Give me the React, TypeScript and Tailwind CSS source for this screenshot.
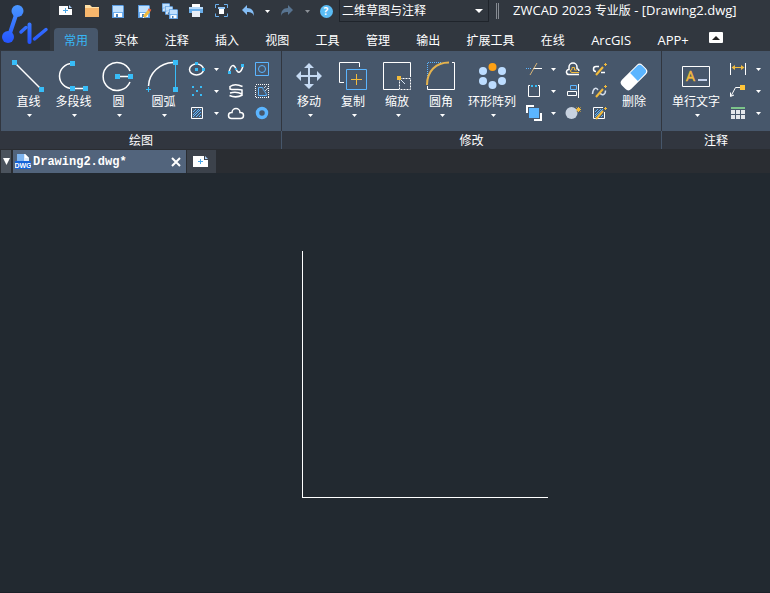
import React from 'react'

const SANS = 'font-["Open_Sans","Noto_Sans_CJK_SC",sans-serif]'

const BLUE = '#5bb5ff'
const CYAN = '#38bdf8'
const GOLD = '#f2bb3c'

interface Tool {
  label: string;
  icon: React.ReactNode;
}

const Icon = ({ children }: { children: React.ReactNode }) => (
  <svg className="h-[18px] w-[18px] shrink-0" viewBox="0 0 18 18" fill="none" stroke="#fff">
    {children}
  </svg>
)

const Caret = ({ color = '#fff' }: { color?: string }) => (
  <svg className="h-[3px] w-[5px]" viewBox="0 0 5 3">
    <path d="M0 0h5L2.5 3z" fill={color} />
  </svg>
)

const Dot = ({ x, y, s = 5 }: { x: number; y: number; s?: number }) => (
  <rect x={x} y={y} width={s} height={s} fill={CYAN} stroke="none" />
)

const Floppy = ({ x = 0, y = 0, s = 12 }: { x?: number; y?: number; s?: number }) => (
  <svg x={x} y={y} width={s} height={s + 1} viewBox="0 0 12 13" stroke="none">
    <path d="M0 0h11l1 1v12H0z" fill="#5a9be0" />
    <path d="M1 1h10v6H1z" fill="#bfe0ff" />
    <path d="M1 7h10v5H1z" fill="#6fb0f0" />
    <path d="M2 8h8v4H2z" fill="#fff" />
    <path d="M4 9h2v3H4z" fill="#4a80b8" />
  </svg>
)

const Hatch = () => (
  <path d="M5 8l3-3M5 11l6-6M5 13l8-8M8 13l5-5M11 13l2-2" stroke={BLUE} strokeWidth="1" />
)

const Logo = () => (
  <svg className="h-[50px] w-[50px]" viewBox="0 0 50 50" fill="none">
    <defs>
      <linearGradient id="logo" gradientUnits="userSpaceOnUse" x1="0" y1="5" x2="0" y2="44">
        <stop offset="0" stopColor="#4a97ff" />
        <stop offset="1" stopColor="#2352ff" />
      </linearGradient>
    </defs>
    <g stroke="url(#logo)" strokeLinecap="round">
      <path d="M17 12L9 36" strokeWidth="4" />
      <path d="M21 32L26 27.500" strokeWidth="3.500" />
      <path d="M29.500 24.500V42" strokeWidth="4" />
      <path d="M34.500 39L46 29.500" strokeWidth="3.500" />
    </g>
    <circle cx="17.500" cy="11" r="6" fill="url(#logo)" />
    <circle cx="8" cy="37" r="6" fill="url(#logo)" />
  </svg>
)

const quickTools: Tool[] = [
  {
    label: '新建',
    icon: (
      <Icon>
        <path d="M3 4h9v3h4v6H3z" fill="#fff" stroke="none" />
        <path d="M13 3v3h3z" fill="#a8cdf5" stroke="none" />
        <path d="M9.500 6v5M7 8.500h5" stroke="#4aa8e8" />
      </Icon>
    )
  },
  {
    label: '打开',
    icon: (
      <Icon>
        <path d="M3 3h5l2 2h7v3H3z" fill="#ffe0a6" stroke="none" />
        <path d="M3 6h14v9H3z" fill="#f7b66c" stroke="none" />
      </Icon>
    )
  },
  { label: '保存', icon: <Icon><Floppy x={4} y={3} /></Icon> },
  {
    label: '另存为',
    icon: (
      <Icon>
        <Floppy x={4} y={3} />
        <path d="M10 15l5-6" stroke={GOLD} strokeWidth="3" />
        <path d="M15 9l1-2" stroke="#e8663c" strokeWidth="3" />
        <path d="M9 16l1-1" stroke="#fff" />
      </Icon>
    )
  },
  {
    label: '全部保存',
    icon: (
      <Icon>
        <Floppy x={2} y={1} s={8} />
        <Floppy x={5} y={4} s={8} />
        <Floppy x={9} y={7} s={9} />
      </Icon>
    )
  },
  {
    label: '打印',
    icon: (
      <Icon>
        <path d="M6 2h8v4H6z" fill="#fff" stroke="none" />
        <path d="M3 5h14v6H3z" fill="#6aaeea" stroke="none" />
        <path d="M3 5h14v2H3z" fill="#b9dbfb" stroke="none" />
        <path d="M6 9h8v6H6z" fill="#e8eef6" stroke="none" />
      </Icon>
    )
  },
  {
    label: '打印预览',
    icon: (
      <Icon>
        <path d="M3.500 6V2.500H7M12 2.500h3.500V6M3.500 11.500V14.500H7M12 14.500h3.500v-3" stroke="#6aaeea" />
        <path d="M6 5h7v2H6z" fill="#8fc4f5" stroke="none" />
        <path d="M7 7h5v5H7z" fill="#fff" stroke="none" />
      </Icon>
    )
  }
]

const tabs = ['常用', '实体', '注释', '插入', '视图', '工具', '管理', '输出', '扩展工具', '在线']
const addonTabs = ['ArcGIS', 'APP+']

const drawTools: Tool[] = [
  {
    label: '直线',
    icon: (
      <>
        <path d="M9 5l27 27" strokeWidth="1.500" />
        <Dot x={6} y={2} />
        <Dot x={33} y={29} />
      </>
    )
  },
  {
    label: '多段线',
    icon: (
      <>
        <path d="M21 5.500A12.500 12.500 0 0 0 21 30.500H33" strokeWidth="1.500" />
        <Dot x={19} y={3} />
        <Dot x={19} y={28} />
        <Dot x={32} y={28} />
      </>
    )
  },
  {
    label: '圆',
    icon: (
      <>
        <path d="M34 13A14 14 0 1 0 34 24M22 18.500h12" strokeWidth="1.500" />
        <Dot x={19} y={16} />
        <Dot x={32} y={16} />
      </>
    )
  },
  {
    label: '圆弧',
    icon: (
      <>
        <path d="M7.500 28C8 15 19 5 32 4.500" strokeWidth="1.500" />
        <path d="M34.500 7v22" stroke={CYAN} />
        <path d="M7.500 29v5M5 31.500h5" stroke={CYAN} />
        <Dot x={32} y={2} />
        <Dot x={32} y={29} />
      </>
    )
  }
]

const modifyTools: Tool[] = [
  {
    label: '移动',
    icon: (
      <g fill="#c5daf3" stroke="none">
        <path d="M21 9h2v8h8v2h-8v8h-2v-8h-8v-2h8z" />
        <path d="M22 5l5 5h-10zM22 31l5-5h-10zM9 18l5-5v10zM35 18l-5-5v10z" />
      </g>
    )
  },
  {
    label: '复制',
    icon: (
      <>
        <path d="M13 24.500H8.500V4.500H28.500V9" />
        <path d="M15.500 11.500h20v20h-20z" stroke={BLUE} />
        <path d="M25.500 16v11M20 21.500h11" stroke={GOLD} />
      </>
    )
  },
  {
    label: '缩放',
    icon: (
      <>
        <path d="M24 31.500H8.500V4.500H35.500V19" />
        <path d="M24.500 20.500h11v11h-11z" strokeDasharray="2 1" />
        <path d="M26 22l4 4" stroke="#d8e6f5" />
        <path d="M22 18h4v4h-4z" fill={GOLD} stroke="none" />
      </>
    )
  },
  {
    label: '圆角',
    icon: (
      <>
        <path d="M8.500 24V4.500H22" stroke={BLUE} strokeDasharray="1 1" />
        <path d="M33 4.500h2.500v27h-27V28" />
        <path d="M8 27C8 13 17 4.500 30 4.500" stroke="#e5b34e" strokeWidth="2" />
      </>
    )
  }
]

const arrayIcon = (
  <g fill="#bcdcff" stroke="none">
    <circle cx="29.500" cy="9" r="4" fill="#ffa114" />
    <circle cx="39" cy="13" r="4" />
    <circle cx="39" cy="23" r="4" />
    <circle cx="29.500" cy="27" r="4" />
    <circle cx="20" cy="23" r="4" />
    <circle cx="20" cy="13" r="4" />
  </g>
)

const eraseIcon = (
  <g transform="rotate(-45 19 19)" stroke="none">
    <rect x="4.500" y="12.500" width="29" height="13" rx="4" fill="#fff" />
    <path d="M19 13.500h10a3.500 3.500 0 0 1 3.500 3.500v4a3.500 3.500 0 0 1-3.500 3.500H19z" fill={BLUE} />
  </g>
)

const textIcon = (
  <>
    <path d="M15.500 8.500h27v20h-27z" />
    <text x="19" y="23" fontSize="14" fontFamily="Open Sans" fill={GOLD} stroke={GOLD} strokeWidth="0.500">A</text>
    <path d="M31 22h9" stroke="#c3d0ea" strokeWidth="2" />
  </>
)

const pen = (
  <>
    <path d="M6 15l7-8" stroke={GOLD} strokeWidth="2" />
    <path d="M15.500 3v3M14 4.500h3" stroke={GOLD} />
  </>
)

// each row: icon with a menu, then two plain icons
const drawGrid: Tool[][] = [
  [
    {
      label: '椭圆',
      icon: (
        <>
          <ellipse cx="8.500" cy="9.500" rx="7" ry="5.500" strokeWidth="1.500" />
          <Dot x={7} y={2} s={3} />
          <Dot x={7} y={8} s={3} />
          <Dot x={14} y={8} s={3} />
        </>
      )
    },
    {
      label: '样条曲线',
      icon: (
        <>
          <path d="M2 12C4 4 7 4 9 9S14 13 16 6" strokeWidth="1.500" />
          <Dot x={1} y={11} s={3} />
          <Dot x={8} y={8} s={2} />
          <Dot x={14} y={4} s={3} />
        </>
      )
    },
    {
      label: '面域',
      icon: (
        <g stroke={BLUE}>
          <path d="M2.500 2.500h13v13h-13z" />
          <circle cx="9" cy="9" r="3.500" />
        </g>
      )
    }
  ],
  [
    {
      label: '点',
      icon: (
        <>
          <Dot x={4} y={4} s={2} />
          <Dot x={12} y={4} s={2} />
          <Dot x={8} y={8} s={2} />
          <Dot x={4} y={12} s={2} />
          <Dot x={12} y={12} s={2} />
        </>
      )
    },
    {
      label: '螺旋',
      icon: (
        <path
          d="M15.500 4.500C11 2.500 6 2.500 3 4.500V7C7 8.500 11 6.500 15 8V12C11 10 7 10 3 11M2.500 13.500C7 15.500 11 15.500 15.500 13"
          strokeWidth="1.500"
        />
      )
    },
    {
      label: '区域覆盖',
      icon: (
        <>
          <path d="M2.500 2.500h13v13h-13z" strokeDasharray="1 1" shapeRendering="crispEdges" />
          <path d="M5.500 5.500h4c.5 3 4 5 4 8h-8z" stroke={BLUE} />
          <path d="M11 6l2-2M12 9l3-3" stroke="#c9d4e2" />
        </>
      )
    }
  ],
  [
    {
      label: '图案填充',
      icon: (
        <>
          <path d="M3.500 3.500h11v11h-11z" />
          <Hatch />
        </>
      )
    },
    {
      label: '修订云线',
      icon: (
        <path d="M4.500 14.500A3 3 0 0 1 4.500 8.500H5A4 4 0 1 1 13 8.500H13.500A3 3 0 0 1 13.500 14.500z" strokeWidth="1.500" />
      )
    },
    { label: '圆环', icon: <circle cx="9" cy="9" r="4.500" stroke={BLUE} strokeWidth="3.500" /> }
  ]
]

const modifyGrid: Tool[][] = [
  [
    {
      label: '修剪',
      icon: (
        <>
          <path d="M1 8.500h6" stroke={BLUE} strokeDasharray="1 1" />
          <path d="M8 8.500h9" />
          <path d="M5 15l7-12" stroke="#d9b678" />
        </>
      )
    },
    {
      label: '偏移',
      icon: (
        <>
          <path d="M15 14.500H5.500A2.500 2.500 0 0 1 4.500 9.500H5V7A4 4 0 0 1 13 7V8.500C14.500 9 15 10 15 11" strokeWidth="1.500" />
          <path d="M15 12.500H8A1.500 1.500 0 0 1 8 9.500V7.500H10.500V10H13" stroke={GOLD} />
        </>
      )
    },
    {
      label: '编辑多段线',
      icon: (
        <>
          <path d="M9 6.500H6A2.500 2.500 0 0 0 6 11.500M11 12.500h4" strokeWidth="1.500" />
          {pen}
        </>
      )
    }
  ],
  [
    {
      label: '拉伸',
      icon: (
        <>
          <path d="M5 3.500H3.500v11h11v-11H13" />
          <Dot x={6} y={3} s={2} />
          <Dot x={10} y={3} s={2} />
        </>
      )
    },
    {
      label: '对齐',
      icon: (
        <>
          <path d="M6.500 3.500h6v4h-6z" stroke={BLUE} />
          <path d="M3.500 9.500h9v4h-9zM14.500 2v14" />
        </>
      )
    },
    {
      label: '编辑样条曲线',
      icon: (
        <>
          <path d="M2.500 12C3 6 6 5 8 8M10 11C12 14 15.500 13 15.500 8.500" stroke="#d5deea" strokeWidth="1.500" />
          {pen}
        </>
      )
    }
  ],
  [
    {
      label: '绘图次序',
      icon: (
        <>
          <path d="M4 4h10v10H4z" fill={BLUE} stroke="none" />
          <path d="M2 9V2h7M16 9v7H9" strokeWidth="2" />
        </>
      )
    },
    {
      label: '分解',
      icon: (
        <>
          <circle cx="7.500" cy="9" r="6" fill="#c8d2e0" stroke="none" />
          <path d="M14.500 3v5M12 5.500h5M12.500 3.500l4 4M16.500 3.500l-4 4" stroke={GOLD} />
        </>
      )
    },
    {
      label: '编辑图案填充',
      icon: (
        <>
          <path d="M13 3.500H3.500v11h11V8" />
          <Hatch />
          {pen}
        </>
      )
    }
  ]
]

const annotateGrid: Tool[][] = [
  [
    {
      label: '标注',
      icon: (
        <>
          <path d="M1.500 3v12M16.500 3v12" />
          <path d="M4 7.500h10" stroke={GOLD} />
          <path d="M2.500 7.500L6 5v5zM15.500 7.500L12 5v5z" fill={GOLD} stroke="none" />
        </>
      )
    }
  ],
  [
    {
      label: '引线',
      icon: (
        <>
          <path d="M11 5.500H6.500L2 14M1.500 10.500V14.500L5 13" />
          <path d="M11 3h5v5h-5z" fill="#ffc53a" stroke="none" />
        </>
      )
    }
  ],
  [
    {
      label: '表格',
      icon: (
        <g stroke="none">
          <path d="M2 3h14v2H2z" fill="#7cc48a" />
          <path d="M2 6h4v4H2zM7 6h4v4H7zM12 6h4v4h-4zM2 11h4v4H2zM7 11h4v4H7zM12 11h4v4h-4z" fill="#e3e6ea" />
        </g>
      )
    }
  ]
]

interface BigToolProps extends Tool {
  size?: 'sm' | 'md' | 'lg' | 'xl';
  menu?: boolean;
}

const sizes = {
  sm: { box: 'w-[38px]', width: 38 },
  md: { box: 'w-[44px]', width: 44 },
  lg: { box: 'w-[45px]', width: 45 },
  xl: { box: 'w-[58px]', width: 58 }
}

const BigTool = ({ label, icon, size = 'md', menu = true }: BigToolProps) => (
  <button type="button" className={`flex flex-col items-center shrink-0 ${sizes[size].box}`}>
    <svg
      className="h-[34px] w-full"
      viewBox={`0 0 ${sizes[size].width} 34`}
      fill="none"
      stroke="#fff"
    >
      {icon}
    </svg>
    <span className="mt-px whitespace-nowrap text-xs leading-[18px]">{label}</span>
    {menu && <span className="flex h-2 items-center pl-0.5"><Caret /></span>}
  </button>
)

const SmallTool = ({ label, icon }: Tool) => (
  <button type="button" aria-label={label} className="flex items-center justify-center">
    <Icon>{icon}</Icon>
  </button>
)

const MenuButton = ({ label }: { label: string }) => (
  <button type="button" aria-label={label} className="flex items-center justify-center">
    <Caret />
  </button>
)

const ToolGrid = ({ rows }: { rows: Tool[][] }) => (
  <div className="grid shrink-0 grid-cols-[18px_20px_20px_32px] auto-rows-[22px]">
    {rows.map(([first, second, third]) => (
      <React.Fragment key={first.label}>
        <SmallTool {...first} />
        <MenuButton label={`${first.label}菜单`} />
        <SmallTool {...second} />
        <SmallTool {...third} />
      </React.Fragment>
    ))}
  </div>
)

interface PanelProps {
  title: string;
  last?: boolean;
  children: React.ReactNode;
}

const Panel = ({ title, last = false, children }: PanelProps) => (
  <section className={`flex flex-col ${last ? 'flex-1' : 'shrink-0'}`}>
    <div className={`flex h-20 items-start bg-[#47576b] pl-[5px] pt-[7px] ${last ? '' : 'border-r border-[#31363f]'}`}>
      {children}
    </div>
    <h2 className={`h-[18px] text-center text-xs leading-5 ${last ? '' : 'border-r border-[#47576b]'}`}>{title}</h2>
  </section>
)

const Header = () => (
  <header className="flex h-[51px] bg-[#31373f]">
    <button type="button" aria-label="ZWCAD" className="h-[50px] w-[50px] shrink-0 bg-[#2b3139]">
      <Logo />
    </button>
    <div className="flex min-w-0 flex-1 flex-col justify-between">
      <div className="flex h-[22px] items-center pl-0.5">
        {quickTools.map((tool) => (
          <button key={tool.label} type="button" aria-label={tool.label} className="flex w-[26px] shrink-0 justify-center">
            {tool.icon}
          </button>
        ))}
        <button type="button" aria-label="撤销" className="flex w-[26px] shrink-0 justify-center">
          <Icon>
            <path d="M4 8l5-5v3c5 0 7 3 7 8c-1-3-3-4-7-4v3z" fill="#84bdf5" stroke="none" />
          </Icon>
        </button>
        <button type="button" aria-label="撤销列表" className="flex w-[14px] shrink-0 justify-center"><Caret /></button>
        <button type="button" aria-label="重做" className="flex w-[26px] shrink-0 justify-center">
          <Icon>
            <path d="M15 8l-5-5v3c-5 0-7 3-7 8c1-3 3-4 7-4v3z" fill="#587491" stroke="none" />
          </Icon>
        </button>
        <button type="button" aria-label="重做列表" className="flex w-[14px] shrink-0 justify-center"><Caret color="#8b9097" /></button>
        <button type="button" aria-label="帮助" className="flex w-[24px] shrink-0 justify-center">
          <span className="h-[13px] w-[13px] rounded-full bg-[#5bbcf5] text-center text-[10px] font-bold leading-[13px]">?</span>
        </button>
        <div className="relative ml-px h-[22px] w-[150px] shrink-0">
          <select
            aria-label="工作空间"
            className="block h-full w-full appearance-none border border-t-0 border-[#1f242b] bg-[#31373f] pl-0.5 text-xs leading-[18px]"
          >
            <option>二维草图与注释</option>
          </select>
          <svg className="pointer-events-none absolute right-1.5 top-[9px] h-1 w-2" viewBox="0 0 8 4">
            <path d="M0 0h8L4 4z" fill="#fff" />
          </svg>
        </div>
        <span className="ml-[7px] h-4 w-[3px] shrink-0 border-x border-[#868b92]" />
        <h1 className="ml-3.5 truncate pb-0.5 text-[13px] leading-[18px]">
          ZWCAD 2023 <span className="text-xs">专业版</span> - [Drawing2.dwg]
        </h1>
      </div>
      <nav className="flex h-[23px] w-full max-w-[673px] items-center justify-between pl-1">
        {tabs.map((tab, i) => (
          <button
            key={tab}
            type="button"
            className={`h-full shrink-0 whitespace-nowrap rounded-t px-2.5 text-xs leading-[25px] ${i === 0 ? 'bg-[#47576b] text-[#38b6f5]' : ''}`}
          >
            {tab}
          </button>
        ))}
        {addonTabs.map((tab) => (
          <button key={tab} type="button" className="h-full shrink-0 whitespace-nowrap px-2.5 text-[13px] leading-[25px]">
            {tab}
          </button>
        ))}
        <button type="button" aria-label="收起功能区" className="mb-1 ml-1 flex h-[11px] w-[14px] shrink-0 items-center justify-center rounded-[1px] bg-white">
          <svg className="h-1 w-2" viewBox="0 0 8 4">
            <path d="M0 4h8L4 0z" fill="#222" />
          </svg>
        </button>
      </nav>
    </div>
  </header>
)

const Ribbon = () => (
  <div className="flex overflow-hidden bg-[#31363f] pl-px">
    <Panel title="绘图">
      {drawTools.map((tool) => <BigTool key={tool.label} {...tool} size="lg" />)}
      <div className="ml-0.5 mr-[3px]"><ToolGrid rows={drawGrid} /></div>
    </Panel>
    <Panel title="修改">
      {modifyTools.map((tool) => <BigTool key={tool.label} {...tool} />)}
      <BigTool label="环形阵列" icon={arrayIcon} size="xl" />
      <div className="ml-1"><ToolGrid rows={modifyGrid} /></div>
      <div className="mr-2"><BigTool label="删除" icon={eraseIcon} size="sm" menu={false} /></div>
    </Panel>
    <Panel title="注释" last>
      <BigTool label="单行文字" icon={textIcon} size="xl" />
      <div className="ml-0.5 grid grid-cols-[22px_18px] auto-rows-[22px]">
        {annotateGrid.map(([tool]) => (
          <React.Fragment key={tool.label}>
            <SmallTool {...tool} />
            <MenuButton label={`${tool.label}菜单`} />
          </React.Fragment>
        ))}
      </div>
    </Panel>
  </div>
)

const FileTabs = () => (
  <div className="flex h-6 bg-[#2a2d32] pl-px pt-px">
    <button type="button" aria-label="图纸列表" className="flex w-2.5 items-center justify-center bg-[#4b535d]">
      <svg className="h-[7px] w-[7px]" viewBox="0 0 7 7">
        <path d="M0 0h7L3.500 7z" fill="#fff" />
      </svg>
    </button>
    <div className="ml-0.5 flex w-[173px] items-center bg-[#52647c] pl-0.5">
      <svg className="h-[18px] w-[16px] shrink-0" viewBox="0 0 16 18">
        <path d="M2 1h8l4 4v11H2z" fill="#dcebfb" />
        <path d="M2 1h7v7H2z" fill="#7db4f0" />
        <path d="M10 1l4 4h-4z" fill="#fff" />
        <path d="M0 8h16v8H0z" fill="#1464d8" />
        <text x="8" y="15" fontSize="7" fontWeight="700" fontFamily="Liberation Sans" textAnchor="middle" fill="#fff">DWG</text>
      </svg>
      <button type="button" className='ml-0.5 flex-1 text-left font-["Liberation_Mono",monospace] text-xs font-bold leading-[18px]'>
        Drawing2.dwg*
      </button>
      <button type="button" aria-label="关闭" className="mr-1 flex h-3 w-3 items-center justify-center">
        <svg className="h-[10px] w-[10px]" viewBox="0 0 10 10" stroke="#fff" strokeWidth="2">
          <path d="M1 1l8 8M9 1l-8 8" />
        </svg>
      </button>
    </div>
    <button type="button" aria-label="新建图纸" className="ml-px flex w-[29px] items-center bg-[#3c424b] pl-1.5">
      <svg className="h-[13px] w-[16px]" viewBox="0 0 16 13">
        <path d="M0 1h11v4h4v7H0z" fill="#fff" />
        <path d="M12 1v3h3z" fill="#a8cdf5" />
        <path d="M7.500 4v5M5 6.500h5" stroke="#4aa8e8" />
      </svg>
    </button>
  </div>
)

export default function App() {
  return (
    <div className={`flex min-h-screen flex-col overflow-hidden bg-[#222930] text-white ${SANS}`}>
      <Header />
      <Ribbon />
      <FileTabs />
      <main className="relative flex-1 border-b border-[#1b2028]">
        <svg className="absolute inset-0 h-full w-full" fill="none" stroke="#fff" shapeRendering="crispEdges">
          <path d="M302.500 78V324.500H548" />
        </svg>
      </main>
    </div>
  )
}
